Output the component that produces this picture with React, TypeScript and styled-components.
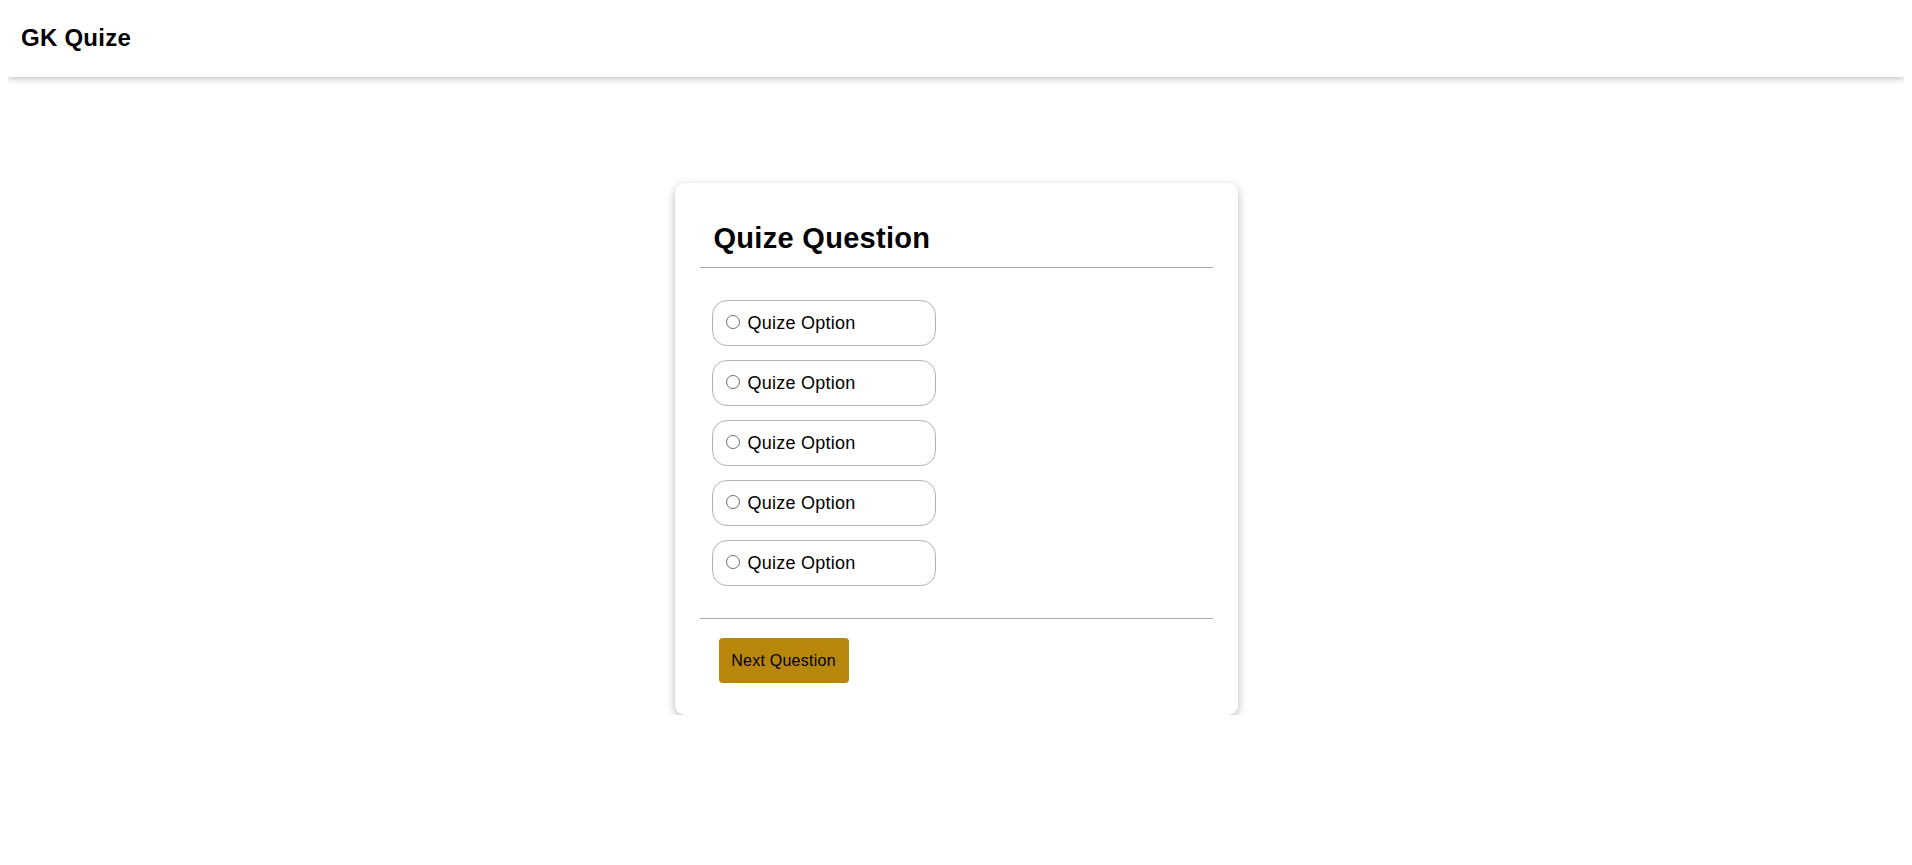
import React from "react";
import styled, { createGlobalStyle } from "styled-components";

const GlobalStyle = createGlobalStyle`
  body {
    margin: 8px;
    background: #ffffff;
    font-family: "Liberation Sans", Arial, sans-serif;
    color: #000;
  }
`;

const TopBar = styled.header`
  height: 69px;
  box-sizing: border-box;
  padding: 16px 13px 0;
  background: #fff;
  box-shadow: 0 2px 6px rgba(0, 0, 0, 0.25);
`;

const Brand = styled.h2`
  margin: 0;
  font-size: 24px;
  font-weight: 700;
  letter-spacing: 0.25px;
`;

const Main = styled.main`
  display: flex;
  justify-content: center;
  padding-top: 106px;
`;

const Card = styled.section`
  width: 563px;
  box-sizing: border-box;
  padding: 25px;
  background: #fff;
  border-radius: 10px;
  box-shadow: 0 3px 10px rgba(0, 0, 0, 0.28);
`;

const CardHead = styled.div`
  padding: 14px 14px 12px;
  border-bottom: 1px solid #aaaaaa;
`;

const Question = styled.h3`
  margin: 0;
  font-size: 29px;
  font-weight: 700;
  letter-spacing: 0.3px;
`;

const OptionList = styled.div`
  display: flex;
  flex-direction: column;
  align-items: flex-start;
  gap: 14px;
  padding: 32px 12px;
  border-bottom: 1px solid #aaaaaa;
`;

const Option = styled.label`
  display: flex;
  align-items: center;
  width: 224px;
  height: 46px;
  box-sizing: border-box;
  padding: 0 8px;
  border: 1px solid #b4b4b4;
  border-radius: 15px;
  font-size: 18px;
  letter-spacing: 0.25px;
  cursor: pointer;
`;

const Radio = styled.input`
  appearance: none;
  -webkit-appearance: none;
  flex: none;
  width: 14px;
  height: 14px;
  margin: 0 8px 0 5px;
  border: 1px solid #6e6e6e;
  border-radius: 50%;
  background: #fff;
  box-sizing: border-box;
  position: relative;
  top: -1px;
`;

const Footer = styled.div`
  padding: 19px 19px 7px;
`;

const NextButton = styled.button`
  width: 130px;
  height: 45px;
  padding: 0;
  border: none;
  border-radius: 4px;
  background: #b8860b;
  color: #000;
  font-family: "Liberation Sans", Arial, sans-serif;
  font-size: 16px;
  letter-spacing: 0.25px;
  cursor: pointer;
`;

export default function App() {
  const options = ["Quize Option", "Quize Option", "Quize Option", "Quize Option", "Quize Option"];
  return (
    <>
      <GlobalStyle />
      <TopBar>
        <Brand>GK Quize</Brand>
      </TopBar>
      <Main>
        <Card>
          <CardHead>
            <Question>Quize Question</Question>
          </CardHead>
          <OptionList>
            {options.map((o, i) => (
              <Option key={i}>
                <Radio type="radio" name="opt" />
                {o}
              </Option>
            ))}
          </OptionList>
          <Footer>
            <NextButton>Next Question</NextButton>
          </Footer>
        </Card>
      </Main>
    </>
  );
}
